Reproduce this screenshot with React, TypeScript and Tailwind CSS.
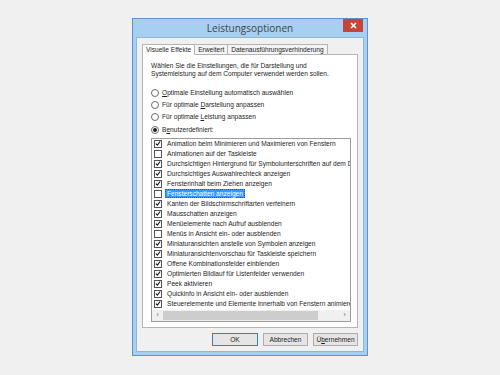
import React from "react";

const items: [string, boolean][] = [
  ["Animation beim Minimieren und Maximieren von Fenstern", true],
  ["Animationen auf der Taskleiste", false],
  ["Durchsichtigen Hintergrund für Symbolunterschriften auf dem Desktop", true],
  ["Durchsichtiges Auswahlrechteck anzeigen", true],
  ["Fensterinhalt beim Ziehen anzeigen", true],
  ["Fensterschatten anzeigen", false],
  ["Kanten der Bildschirmschriftarten verfeinern", true],
  ["Mausschatten anzeigen", true],
  ["Menüelemente nach Aufruf ausblenden", true],
  ["Menüs in Ansicht ein- oder ausblenden", false],
  ["Miniaturansichten anstelle von Symbolen anzeigen", true],
  ["Miniaturansichtenvorschau für Taskleiste speichern", true],
  ["Offene Kombinationsfelder einblenden", true],
  ["Optimierten Bildlauf für Listenfelder verwenden", true],
  ["Peek aktivieren", true],
  ["Quickinfo in Ansicht ein- oder ausblenden", true],
  ["Steuerelemente und Elemente innerhalb von Fenstern animieren", true],
];

function Radio({ checked, children }: { checked?: boolean; children: React.ReactNode }) {
  return (
    <div className="flex h-[12px] items-center gap-[3px]">
      <span className="flex h-[8px] w-[8px] items-center justify-center rounded-full border border-[#6d6d6d] bg-white">
        {checked && <span className="h-[4px] w-[4px] rounded-full bg-[#222]" />}
      </span>
      <span>{children}</span>
    </div>
  );
}

function Check({ on }: { on: boolean }) {
  return (
    <span className="flex h-[8px] w-[8px] shrink-0 items-center justify-center border border-[#555] bg-white">
      {on && (
        <svg width="7" height="7" viewBox="0 0 7 7">
          <path d="M1 3.6 L2.8 5.4 L6 1.2" fill="none" stroke="#1a1a1a" strokeWidth="1.3" />
        </svg>
      )}
    </span>
  );
}

export default function App() {
  return (
    <div
      className="h-[375px] w-[500px] overflow-hidden bg-[#f0f0f0] pl-[132px] pt-[18px] text-[6.6px] text-[#1e1e1e]"
      style={{ fontFamily: '"Liberation Sans", Arial, sans-serif' }}
    >
      <div className="flex h-[338px] w-[236px] flex-col border border-[#5b94cf] bg-[#a7cff2] px-[3px] pb-[3px]">
        <div className="relative flex h-[18px] items-center justify-center">
          <span className="text-[10px] text-[#444]" style={{ fontFamily: '"Open Sans", "Noto Sans", sans-serif' }}>
            Leistungsoptionen
          </span>
          <div className="absolute right-[1px] top-0 flex h-[13px] w-[20px] items-center justify-center bg-[#c8443a]">
            <svg width="7" height="7" viewBox="0 0 7 7">
              <path d="M1 1 L6 6 M6 1 L1 6" stroke="white" strokeWidth="1.6" />
            </svg>
          </div>
        </div>
        <div className="flex flex-1 flex-col border border-[#8db6dc] bg-[#f0f0f0] pl-[5px] pr-[5px] pt-[5px]">
          <div className="flex h-[11px] items-end">
            <div className="z-10 -mb-px flex h-[11px] items-center border border-b-0 border-[#b4b4b4] bg-white px-[3px]">
              Visuelle Effekte
            </div>
            <div className="flex h-[10px] items-center border border-b-0 border-l-0 border-[#b4b4b4] bg-[#f4f4f4] px-[3px]">
              Erweitert
            </div>
            <div className="flex h-[10px] items-center border border-b-0 border-l-0 border-[#b4b4b4] bg-[#f4f4f4] px-[3px]">
              Datenausführungsverhinderung
            </div>
          </div>
          <div className="flex h-[274px] flex-col border border-[#b4b4b4] bg-white px-[8px] pt-[7px]">
            <p className="leading-[8.3px]">
              Wählen Sie die Einstellungen, die für Darstellung und
              <br />
              Systemleistung auf dem Computer verwendet werden sollen.
            </p>
            <div className="mt-[8px] flex flex-col gap-[0.4px]">
              <Radio>
                <u>O</u>ptimale Einstellung automatisch auswählen
              </Radio>
              <Radio>
                Für optimale <u>D</u>arstellung anpassen
              </Radio>
              <Radio>
                Für optimale <u>L</u>eistung anpassen
              </Radio>
              <Radio checked>
                B<u>e</u>nutzerdefiniert:
              </Radio>
            </div>
            <div className="mt-[2px] flex h-[184px] w-[200px] flex-col border border-[#9c9c9c] bg-white">
              <div className="flex-1 overflow-hidden pl-[2px]">
                {items.map(([label, on], i) => (
                  <div key={i} className="flex h-[10px] items-center gap-[3px] whitespace-nowrap">
                    <Check on={on} />
                    {i === 5 ? (
                      <span className="flex h-[9px] items-center border border-dotted border-[#1d5fa6] bg-[#3399ff] px-px text-white">
                        {label}
                      </span>
                    ) : (
                      <span className="pl-[2px]">{label}</span>
                    )}
                  </div>
                ))}
              </div>
              <div className="flex h-[11px] items-center bg-[#f0f0f0]">
                <span className="flex w-[11px] justify-center text-[#666]">‹</span>
                <div className="h-[9px] w-[155px] bg-[#cdcdcd]" />
                <div className="flex-1" />
                <span className="flex w-[11px] justify-center text-[#666]">›</span>
              </div>
            </div>
          </div>
          <div className="mt-[5px] flex justify-end gap-[5px]">
            <button className="flex h-[13px] w-[46px] items-center justify-center border border-[#3c7fb1] bg-[#e5e5e5]">
              OK
            </button>
            <button className="flex h-[13px] w-[45px] items-center justify-center border border-[#acacac] bg-[#e5e5e5]">
              Abbrechen
            </button>
            <button className="flex h-[13px] w-[45px] items-center justify-center border border-[#acacac] bg-[#e5e5e5]">
              Ü<u>b</u>ernehmen
            </button>
          </div>
        </div>
      </div>
    </div>
  );
}
